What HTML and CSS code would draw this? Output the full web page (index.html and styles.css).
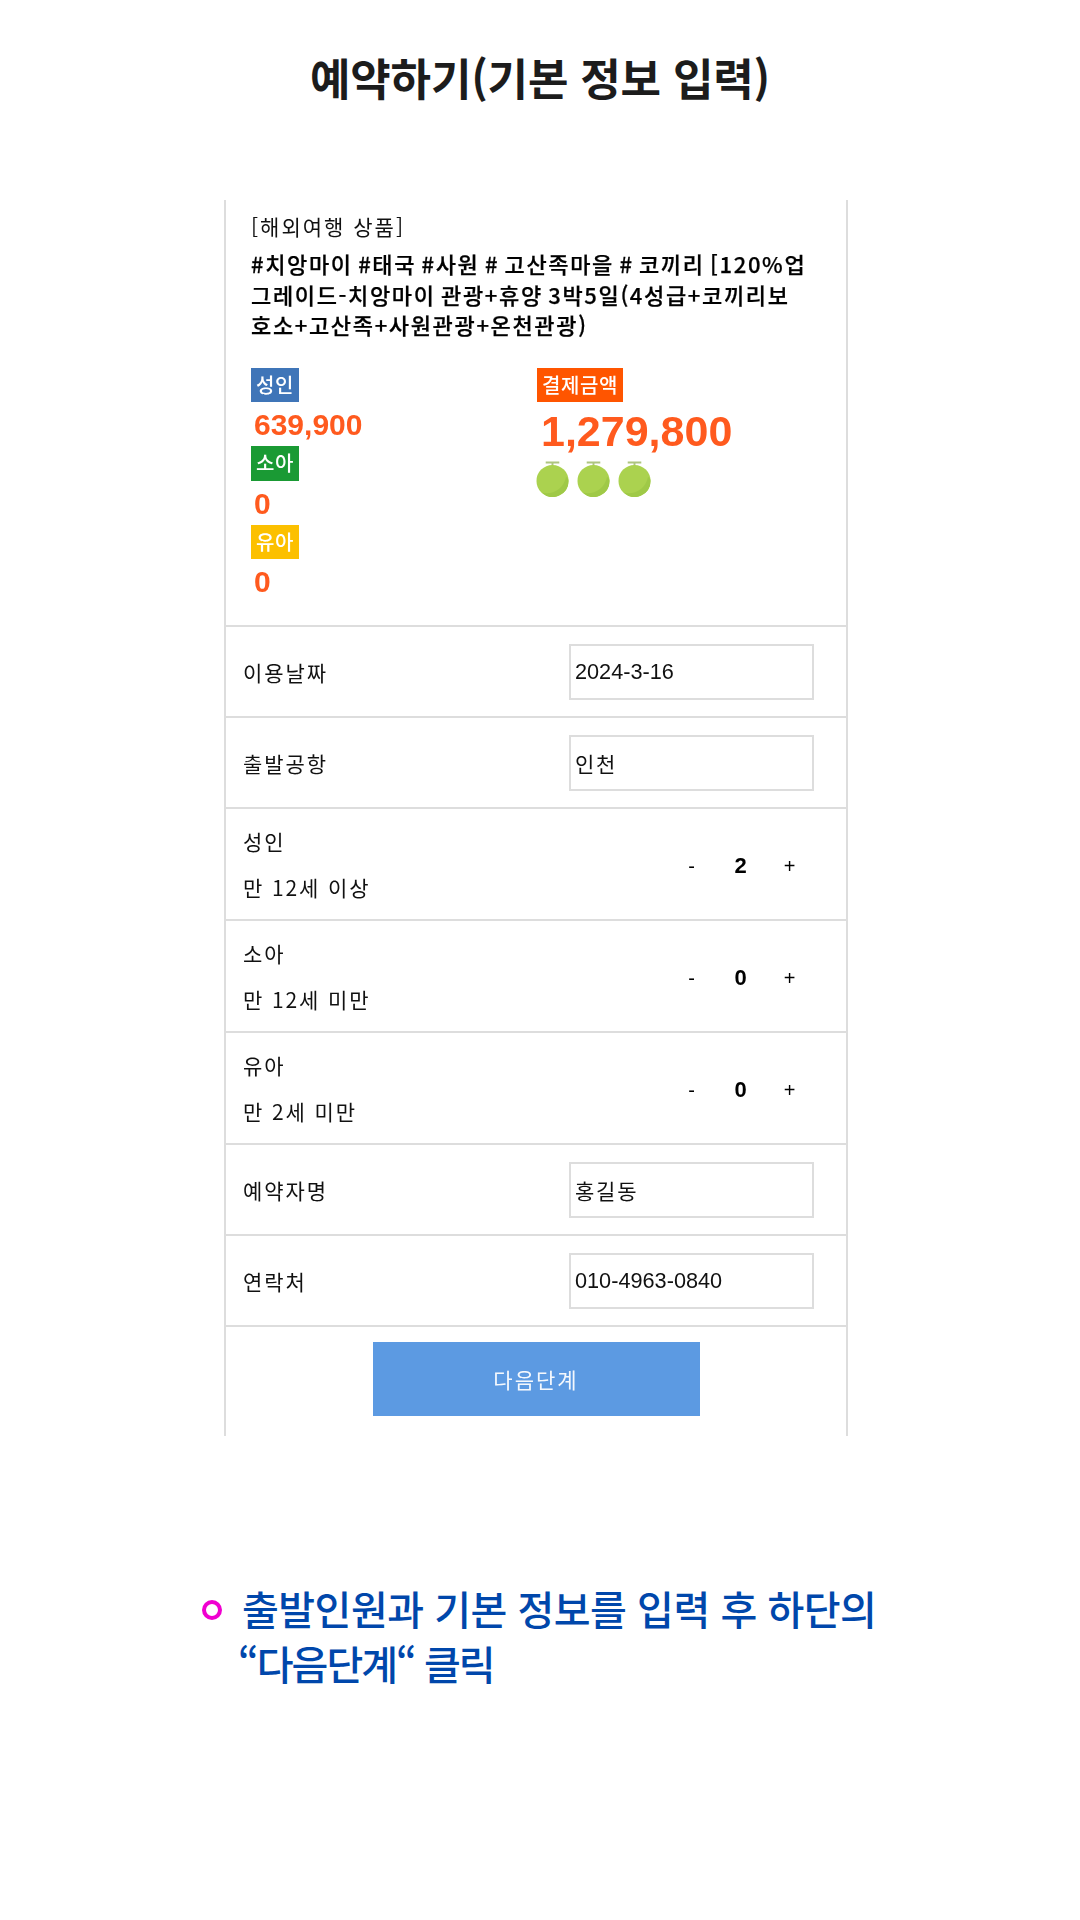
FILE: index.html
```html
<!DOCTYPE html>
<html lang="ko">
<head>
<meta charset="utf-8">
<title>예약하기</title>
<link rel="stylesheet" href="styles.css">
</head>
<body>
<main class="page">
  <h1 class="title">예약하기(기본 정보 입력)</h1>
  <section class="panel">
    <div class="product">
      <p class="category">[해외여행 상품]</p>
      <p class="name">#치앙마이 #태국 #사원 # 고산족마을 # 코끼리 [120%업<br>그레이드-치앙마이 관광+휴양 3박5일(4성급+코끼리보<br>호소+고산족+사원관광+온천관광)</p>
      <div class="prices">
        <div class="price-col">
          <span class="badge badge-adult">성인</span>
          <div class="amount">639,900</div>
          <span class="badge badge-child">소아</span>
          <div class="amount">0</div>
          <span class="badge badge-infant">유아</span>
          <div class="amount">0</div>
        </div>
        <div class="total-col">
          <span class="badge badge-total">결제금액</span>
          <div class="total">1,279,800</div>
          <div class="melons">
            <svg class="melon" viewBox="0 0 34 38"><use href="#melon"/></svg>
            <svg class="melon" viewBox="0 0 34 38"><use href="#melon"/></svg>
            <svg class="melon" viewBox="0 0 34 38"><use href="#melon"/></svg>
          </div>
        </div>
      </div>
    </div>
    <div class="row row-field">
      <span class="label">이용날짜</span>
      <div class="field num">2024-3-16</div>
    </div>
    <div class="row row-field">
      <span class="label">출발공항</span>
      <div class="field">인천</div>
    </div>
    <div class="row row-count">
      <div class="label-stack"><span class="label">성인</span><span class="label">만 12세 이상</span></div>
      <div class="stepper"><span>-</span><b>2</b><span>+</span></div>
    </div>
    <div class="row row-count">
      <div class="label-stack"><span class="label">소아</span><span class="label">만 12세 미만</span></div>
      <div class="stepper"><span>-</span><b>0</b><span>+</span></div>
    </div>
    <div class="row row-count">
      <div class="label-stack"><span class="label">유아</span><span class="label">만 2세 미만</span></div>
      <div class="stepper"><span>-</span><b>0</b><span>+</span></div>
    </div>
    <div class="row row-field">
      <span class="label">예약자명</span>
      <div class="field">홍길동</div>
    </div>
    <div class="row row-field">
      <span class="label">연락처</span>
      <div class="field num">010-4963-0840</div>
    </div>
    <div class="row row-action">
      <div class="next">다음단계</div>
    </div>
  </section>
  <div class="note">
    <span class="ring"></span>
    <p class="note-text"><span class="note-first">출발인원과 기본 정보를 입력 후 하단의</span><br><span class="note-second">“다음단계“ 클릭</span></p>
  </div>
</main>
<svg class="defs" width="0" height="0" aria-hidden="true">
  <symbol id="melon" viewBox="0 0 34 38">
    <path d="M10 2.5h14M17 2.5v5" fill="none" stroke="#aec57f" stroke-width="2"/>
    <circle cx="17" cy="21.5" r="16.5" fill="#abd24f"/>
    <path d="M33.5 21.5A16.5 16.5 0 0 1 6 33.8 C18 36 28 30 31 17.5 C33 18.5 33.5 20 33.5 21.5Z" fill="#9fc947"/>
  </symbol>
</svg>
</body>
</html>
```
FILE: styles.css
```css
* { box-sizing: border-box; }
html, body { margin: 0; padding: 0; background: #fff; }
body { font-family: "Noto Sans CJK KR", "Noto Sans", sans-serif; color: #000; }
.page { width: 1080px; height: 1920px; overflow: hidden; display: flex; flex-direction: column; align-items: center; padding-top: 47px; }
.title { margin: 0; font-size: 44px; line-height: 60px; font-weight: 700; color: #1c1c1c; text-align: center; letter-spacing: -0.2px; }
.panel { width: 624px; margin-top: 93px; margin-right: 8px; border-left: 2px solid #ddd; border-right: 2px solid #ddd; filter: blur(0.4px); }
.product { padding: 11px 25px 22px; }
.category { margin: 0; font-size: 21px; line-height: 30px; letter-spacing: 2px; color: #111; }
.name { margin: 7px 0 0; font-size: 22px; line-height: 30.67px; font-weight: 500; letter-spacing: 1.65px; word-spacing: -2.4px; white-space: nowrap; -webkit-text-stroke: 0.25px #000; }
.prices { display: flex; margin-top: 28px; }
.price-col { width: 286px; display: flex; flex-direction: column; align-items: flex-start; }
.total-col { display: flex; flex-direction: column; align-items: flex-start; }
.badge { display: block; height: 34px; line-height: 34px; padding: 0 5px; font-size: 20px; font-weight: 500; letter-spacing: 0.6px; color: #fff; }
.badge-adult { background: #3f75b8; }
.badge-child { background: #1a9a34; height: 35px; }
.badge-infant { background: #fcc000; }
.badge-total { background: #ff5500; }
.amount { height: 44px; line-height: 45px; padding-left: 3px; font-family: "Liberation Sans", Arial, sans-serif; font-size: 30px; font-weight: 700; color: #ff5a1e; }
.total { height: 58px; line-height: 58px; padding-left: 4px; font-family: "Liberation Sans", Arial, sans-serif; font-size: 43px; font-weight: 700; color: #ff5a1e; }
.melons { display: flex; gap: 8px; margin-left: -1px; }
.melon { display: block; width: 33px; height: 37px; }
.row { display: flex; justify-content: space-between; align-items: center; border-top: 2px solid #ddd; padding: 0 32px 0 17px; }
.row-field { height: 91px; }
.row-count { height: 112px; }
.row-action { height: 111px; justify-content: center; align-items: flex-start; padding: 15px 0 0; }
.label { font-size: 21px; line-height: 46px; letter-spacing: 1.9px; color: #111; }
.label-stack { display: flex; flex-direction: column; }
.field { width: 245px; height: 56px; border: 2px solid #ddd; padding: 1px 0 0 4px; display: flex; align-items: center; font-size: 21px; letter-spacing: 1.8px; color: #111; }
.field.num { font-family: "Liberation Sans", Arial, sans-serif; font-size: 21.7px; letter-spacing: 0; }
.stepper { width: 147px; display: flex; padding-top: 3px; font-family: "Liberation Sans", Arial, sans-serif; font-size: 20px; }
.stepper span, .stepper b { width: 49px; text-align: center; line-height: 30px; }
.stepper b { font-size: 22px; }
.next { width: 327px; height: 74px; background: #5c9ae2; color: #f4f8fd; display: flex; align-items: center; justify-content: center; font-size: 21px; letter-spacing: 2px; }
.note { width: 1080px; margin-top: 145px; padding-left: 202px; display: flex; gap: 16px; align-items: flex-start; }
.ring { width: 20px; height: 20px; margin-top: 19px; flex: none; border: 4px solid #f000d0; border-radius: 50%; }
.note-text { margin: 0; font-size: 40px; line-height: 55px; font-weight: 500; color: #0047ab; white-space: nowrap; }
.note-first { padding-left: 4px; letter-spacing: -0.5px; }
.note-second { letter-spacing: -2px; }
.defs { position: absolute; }
```
